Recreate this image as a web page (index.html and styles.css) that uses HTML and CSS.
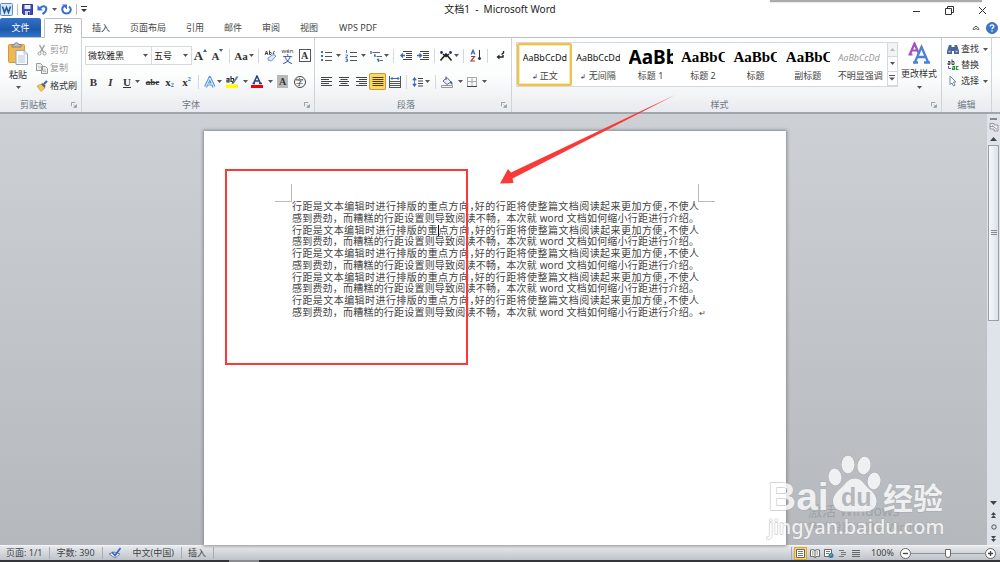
FILE: index.html
```html
<!DOCTYPE html>
<html lang="zh-CN">
<head>
<meta charset="utf-8">
<title>文档1 - Microsoft Word</title>
<link rel="stylesheet" href="styles.css">
</head>
<body>
<svg class="defs" aria-hidden="true">
  <symbol id="caret" viewBox="0 0 5 3"><path d="M0 0h5L2.500 3z" fill="#555"/></symbol>
  <symbol id="launch" viewBox="0 0 7 7"><path d="M.5 5V.5H5" fill="none" stroke="#8a919c"/><path d="M6.500 3v3.500H3zM3 3l2 2" fill="#8a919c" stroke="#8a919c" stroke-width=".6"/></symbol>
</svg>
<div class="app">
  <header class="titlebar">
    <div class="quick">
      <svg width="13" height="13" viewBox="0 0 13 13"><rect x=".5" y=".5" width="12" height="12" rx="1" fill="#dbe8f7" stroke="#5b8bc9"/><path d="M2.500 3.500l2 6 2-5 2 5 2-6" fill="none" stroke="#1f57a8" stroke-width="1.600"/></svg>
      <i class="bar"></i>
      <button class="q" aria-label="保存"><svg width="11" height="11" viewBox="0 0 11 11"><path d="M.5.5h10v10h-9l-1-1z" fill="#4049b4" stroke="#343a94"/><path d="M2.500 1h6v4h-6z" fill="#e8edfa"/><path d="M3 7h5v4H3z" fill="#c9cde6"/><path d="M6 8h1.500v3H6z" fill="#2b2f70"/></svg></button>
      <button class="q undo" aria-label="撤消"><svg width="11" height="11" viewBox="0 0 11 11"><path d="M3 4.500C5 1 9.500 1.800 9.300 5 9.200 7.500 7.500 9 5.500 10" fill="none" stroke="#3a6fcc" stroke-width="2"/><path d="M.5 1v5.500H6z" fill="#3a6fcc"/></svg><svg class="caret dark" width="5" height="3"><use href="#caret"/></svg></button>
      <button class="q" aria-label="重复"><svg width="11" height="11" viewBox="0 0 11 11"><path d="M3 2.200C0 4 1 9.500 5.500 9.500S11 4.500 8 2.500" fill="none" stroke="#3a6fcc" stroke-width="2"/><path d="M1 .5h5v5z" fill="#3a6fcc"/></svg></button>
      <i class="bar"></i>
      <button class="q more" aria-label="自定义快速访问工具栏"><svg width="6" height="7" viewBox="0 0 6 7"><path d="M0 .5h6" stroke="#333"/><path d="M0 3h6L3 6z" fill="#333"/></svg></button>
    </div>
    <h1>文档1&nbsp; -&nbsp; Microsoft Word</h1>
    <div class="winbtns">
      <button aria-label="最小化"><svg width="9" height="9" viewBox="0 0 9 9"><path d="M1 5.500h7" stroke="#333"/></svg></button>
      <button aria-label="还原"><svg width="9" height="9" viewBox="0 0 9 9" fill="none" stroke="#333"><path d="M.5 2.500h6v6h-6zM2.500 2V.5h6v6H7"/></svg></button>
      <button aria-label="关闭"><svg width="9" height="9" viewBox="0 0 9 9"><path d="M1 1l7 7M8 1L1 8" stroke="#333"/></svg></button>
    </div>
  </header>
  <nav class="tabs">
    <button class="file">文件</button>
    <button class="tab current">开始</button>
    <button class="tab">插入</button>
    <button class="tab wide">页面布局</button>
    <button class="tab">引用</button>
    <button class="tab">邮件</button>
    <button class="tab">审阅</button>
    <button class="tab">视图</button>
    <button class="tab wps">WPS PDF</button>
    <div class="help">
      <button aria-label="折叠功能区"><svg width="8" height="6" viewBox="0 0 8 6"><path d="M1 3.500L4 1l3 2.500M1 3.500c-.5 1.500 1 1.500 3 0 2 1.500 3.500 1.500 3 0" fill="none" stroke="#555"/></svg></button>
      <button aria-label="帮助"><svg width="12" height="12" viewBox="0 0 12 12"><circle cx="6" cy="6" r="5.600" fill="#3c78c8" stroke="#2a5ba3" stroke-width=".7"/><path d="M4.200 4.600C4.200 2.300 8 2.400 7.800 4.600 7.600 5.700 6 5.700 6 7.200" fill="none" stroke="#fff" stroke-width="1.300"/><circle cx="6" cy="9" r=".8" fill="#fff"/></svg></button>
    </div>
  </nav>
  <section class="ribbon">
    <div class="group clip">
      <div class="body">
        <button class="big"><svg width="20" height="24" viewBox="0 0 20 24"><rect x=".5" y="2.500" width="16" height="18" rx="1" fill="#f0b84e" stroke="#d39a35"/><path d="M4 2.500h2.500C6.500 0 10.500 0 10.500 2.500H13V5H4z" fill="#b9bec6" stroke="#6e747d" stroke-width=".8"/><path d="M8 8.500h8l3.500 3.500v10.500H8z" fill="#f8fbff" stroke="#8fa3bd"/><path d="M16 8.500V12h3.500M10 14h7M10 16h7M10 18h7M10 20h7" fill="none" stroke="#a9bcd4" stroke-width=".8"/></svg><span>粘贴</span><svg class="caret" width="5" height="3"><use href="#caret"/></svg></button>
        <div class="list">
          <button class="line off"><svg width="12" height="12" viewBox="0 0 12 12" fill="none" stroke="#999"><path d="M3.500 1l4 7M8.500 1l-4 7" stroke-width="1.300"/><circle cx="3.500" cy="9.500" r="1.500"/><circle cx="8.500" cy="9.500" r="1.500"/></svg>剪切</button>
          <button class="line off"><svg width="12" height="12" viewBox="0 0 12 12" fill="#eee" stroke="#999"><path d="M.5 1.500h4l2 2v5h-6zM5.500 4.500h4l2 2v5h-6z"/><path d="M2 5h3M7 8h3M7 9.500h3" stroke-width=".6"/></svg>复制</button>
          <button class="line"><svg width="12" height="12" viewBox="0 0 12 12"><path d="M1 6l4-2 4 4-4 3.500z" fill="#f2c94f" stroke="#c18f26" stroke-width=".6"/><path d="M5 4l2-1 2.500 2.500L9 8z" fill="#555f78"/><path d="M8 4l3-3" stroke="#3b62ae" stroke-width="2"/></svg>格式刷</button>
        </div>
      </div>
      <footer><span>剪贴板</span><svg width="6" height="6"><use href="#launch"/></svg></footer>
    </div>
    <div class="group font">
      <div class="rows">
        <div class="row">
          <select class="combo name" aria-label="字体"><option>微软雅黑</option></select>
          <select class="combo size" aria-label="字号"><option>五号</option></select>
          <button class="w17 serif"><span class="t13">A</span><svg class="tip" width="4" height="3" viewBox="0 0 4 3"><path d="M0 3h4L2 0z" fill="#2d5fb3"/></svg></button>
          <button class="w17 serif"><span class="t11">A</span><svg class="tip" width="4" height="3" viewBox="0 0 4 3"><path d="M0 0h4L2 3z" fill="#2d5fb3"/></svg></button>
          <i class="sep"></i>
          <button class="w22 serif"><span class="t11">Aa</span><svg class="caret" width="5" height="3"><use href="#caret"/></svg></button>
          <i class="sep"></i>
          <button class="w17" aria-label="清除格式"><svg width="13" height="13" viewBox="0 0 13 13"><path d="M1 6l1.500-4L4 6M1.500 4.500h2M5.500 1.500v4h1.500q1.500-1 0-2H5.500M10.500 2Q8.500 3 10 5.500" fill="none" stroke="#333" stroke-width=".9"/><path d="M4 9l5-3.500 3 1.500-4.500 5L4 11z" fill="#dbe9fa" stroke="#5b86c4" stroke-width=".8"/></svg></button>
          <button class="w17 pinyin"><small>wén</small><span>文</span></button>
          <button class="w17"><span class="boxed">A</span></button>
        </div>
        <div class="row">
          <button class="w17 serif t11">B</button>
          <button class="w17 serif t11"><em>I</em></button>
          <button class="w25 serif t11"><u>U</u><svg class="caret far" width="5" height="3"><use href="#caret"/></svg></button>
          <button class="w17 serif t9"><s>abe</s></button>
          <button class="w17 serif t11">x<sub>2</sub></button>
          <button class="w17 serif t11">x<sup>2</sup></button>
          <i class="sep"></i>
          <button class="w22" aria-label="文本效果"><svg width="12" height="12" viewBox="0 0 12 12"><path d="M1.500 11L5.800 2 10 11M3.500 8h5" fill="none" stroke="#5a9bd8" stroke-width="3.200"/><path d="M1.500 11L5.800 2 10 11M3.500 8h5" fill="none" stroke="#e9f5ff" stroke-width="1"/></svg><svg class="caret" width="5" height="3"><use href="#caret"/></svg></button>
          <button class="w25" aria-label="突出显示"><svg width="13" height="13" viewBox="0 0 13 13"><path d="M0 9.500h12V13H0z" fill="#ff0"/><path d="M.5 3.500h2.500V7H1V5h2M5 1v5.500h2.500v-3H5" fill="none" stroke="#333" stroke-width="1.200"/><path d="M7 8l4.500-6.500" stroke="#5f82b5" stroke-width="2"/><path d="M5.500 9l1-2 1.500 1z" fill="#222"/></svg><svg class="caret far" width="5" height="3"><use href="#caret"/></svg></button>
          <button class="w25" aria-label="字体颜色"><svg width="13" height="13" viewBox="0 0 13 13"><path d="M0 10h12v3H0z" fill="#f00000"/><path d="M2.500 8.500L6 1l3.500 7.500M4 6h4M1.500 8.500h2.500M8 8.500h3" fill="none" stroke="#24427f" stroke-width="1.500"/></svg><svg class="caret far" width="5" height="3"><use href="#caret"/></svg></button>
          <button class="w17"><span class="shade">A</span></button>
          <button class="w17"><span class="ring">字</span></button>
        </div>
      </div>
      <footer><span>字体</span><svg width="6" height="6"><use href="#launch"/></svg></footer>
    </div>
    <div class="group para">
      <div class="rows">
        <div class="row">
          <button class="w25" aria-label="项目符号"><svg width="12" height="12" viewBox="0 0 12 12"><path d="M1 1h2v2H1zM1 5h2v2H1zM1 9h2v2H1z" fill="#3f6fbc"/><path d="M5 2.500h7M5 6.500h7M5 10.500h7" stroke="#555"/></svg><svg class="caret far" width="5" height="3"><use href="#caret"/></svg></button>
          <button class="w25" aria-label="编号"><svg width="12" height="12" viewBox="0 0 12 12"><path d="M1.500 0v3M.5 5h2v1l-2 1.500h2M.5 9h2v2.500h-2M1 10h1.500" fill="none" stroke="#3f6fbc" stroke-width=".9"/><path d="M5 2.500h7M5 6.500h7M5 10.500h7" stroke="#555"/></svg><svg class="caret far" width="5" height="3"><use href="#caret"/></svg></button>
          <button class="w22" aria-label="多级列表"><svg width="13" height="12" viewBox="0 0 13 12"><path d="M1 1v3M4 5h1v2M7 9.500h1.500V12" fill="none" stroke="#3f6fbc" stroke-width="1.400"/><path d="M2.500 2.500H10M6.500 6.500H12M9.500 10.500H13" stroke="#666"/></svg><svg class="caret" width="5" height="3"><use href="#caret"/></svg></button>
          <i class="sep"></i>
          <button class="w17" aria-label="减少缩进"><svg width="12" height="12" viewBox="0 0 12 12"><path d="M3 1.500h9M6 3.500h6M6 5.500h6M6 7.500h6M3 9.500h9" stroke="#444"/><path d="M5 5.500H1M3 3.500l-2 2 2 2" fill="none" stroke="#3569bd" stroke-width="1.400"/></svg></button>
          <button class="w17" aria-label="增加缩进"><svg width="12" height="12" viewBox="0 0 12 12"><path d="M3 1.500h9M6 3.500h6M6 5.500h6M6 7.500h6M3 9.500h9" stroke="#444"/><path d="M0 5.500h4M2.500 3.500l2 2-2 2" fill="none" stroke="#3569bd" stroke-width="1.400"/></svg></button>
          <i class="sep"></i>
          <button class="w22" aria-label="中文版式"><svg width="14" height="12" viewBox="0 0 14 12"><path d="M1.500 10.500L7 4l5.500 6.500M4 4l3 2.500L10 4" fill="none" stroke="#222" stroke-width="1.600"/><circle cx="2.500" cy="2.500" r="1.400" fill="#222a8c"/><circle cx="11.500" cy="2.500" r="1.400" fill="#222a8c"/></svg><svg class="caret" width="5" height="3"><use href="#caret"/></svg></button>
          <i class="sep"></i>
          <button class="w17" aria-label="排序"><svg width="12" height="13" viewBox="0 0 12 13"><path d="M1 5.500L3 1l2 4.500M2 4h2" fill="none" stroke="#3569bd" stroke-width="1.100"/><path d="M1 7.500h3.500L1 12h4" fill="none" stroke="#b23030" stroke-width="1.200"/><path d="M9.500 1v10M8 9l1.500 2L11 9z" fill="#333" stroke="#333"/></svg></button>
          <i class="sep"></i>
          <button class="w17" aria-label="显示编辑标记"><svg width="12" height="12" viewBox="0 0 12 12"><path d="M9.500 1v2L7.500 4.500" fill="none" stroke="#222" stroke-width="1.400"/><path d="M9 5v2H5" fill="none" stroke="#222" stroke-width="1.400"/><path d="M5.500 4.500L2.500 7l3 2.500z" fill="#222"/></svg></button>
        </div>
        <div class="row">
          <button class="w17" aria-label="左对齐"><svg width="12" height="11" viewBox="0 0 12 11"><path d="M0 1.500h11M0 3.500h8M0 5.500h11M0 7.500h8M0 9.500h11" stroke="#444"/></svg></button>
          <button class="w17" aria-label="居中"><svg width="12" height="11" viewBox="0 0 12 11"><path d="M1 1.500h10M2.500 3.500h7M1 5.500h10M2.500 7.500h7M1 9.500h10" stroke="#444"/></svg></button>
          <button class="w17" aria-label="右对齐"><svg width="12" height="11" viewBox="0 0 12 11"><path d="M1 1.500h11M4 3.500h8M1 5.500h11M4 7.500h8M1 9.500h11" stroke="#444"/></svg></button>
          <button class="w17 active" aria-label="两端对齐"><svg width="12" height="11" viewBox="0 0 12 11"><path d="M.5 1.500h11M.5 3.500h11M.5 5.500h11M.5 7.500h11M.5 9.500h11" stroke="#4a3f18"/></svg></button>
          <button class="w17" aria-label="分散对齐"><svg width="12" height="12" viewBox="0 0 12 12"><path d="M.5 0v12M11.500 0v12M1 5.500h10M1 7.500h10M1 9.500h10M1 11.500h10" stroke="#555"/><path d="M2 2.500h8M3.500 1L2 2.500 3.500 4M8.500 1L10 2.500 8.500 4" fill="none" stroke="#3569bd"/></svg></button>
          <i class="sep"></i>
          <button class="w22" aria-label="行距"><svg width="12" height="12" viewBox="0 0 12 12"><path d="M2.500 1.500v9M.8 4l1.700-2.500L4.200 4zM.8 8l1.700 2.500L4.200 8z" fill="#3569bd" stroke="#3569bd" stroke-width=".8"/><path d="M6 2.500h5M6 5h5M6 7.500h5M6 10h5" stroke="#444"/></svg><svg class="caret" width="5" height="3"><use href="#caret"/></svg></button>
          <i class="sep"></i>
          <button class="w25" aria-label="底纹"><svg width="13" height="12" viewBox="0 0 13 12"><path d="M2 5l4-3.500L10 6 6 8.500z" fill="#e8f0fb" stroke="#557" stroke-width=".9"/><path d="M10 5q2 1 1.500 4Q9 8 9 6z" fill="#3569bd"/><path d="M5 4V.5" stroke="#557"/><path d="M.5 9.500h11v2H.5z" fill="#eee" stroke="#999"/></svg><svg class="caret far" width="5" height="3"><use href="#caret"/></svg></button>
          <button class="w25" aria-label="边框"><svg width="12" height="12" viewBox="0 0 12 12" fill="none"><path d="M1 1.500h10M1.500 1v9M10.500 1v9M6 1v9M1 5.500h10" stroke="#aaa"/><path d="M1 10.500h10" stroke="#444"/></svg><svg class="caret far" width="5" height="3"><use href="#caret"/></svg></button>
        </div>
      </div>
      <footer><span>段落</span><svg width="6" height="6"><use href="#launch"/></svg></footer>
    </div>
    <div class="group styles">
      <div class="body">
        <div class="gallery">
          <button class="style chosen"><b class="plain">AaBbCcDd</b><span><small>↲</small> 正文</span></button>
          <button class="style"><b class="plain">AaBbCcDd</b><span><small>↲</small> 无间隔</span></button>
          <button class="style"><b class="head">AaBb</b><span>标题 1</span></button>
          <button class="style"><b class="cambria">AaBbC</b><span>标题 2</span></button>
          <button class="style"><b class="cambria">AaBbC</b><span>标题</span></button>
          <button class="style"><b class="cambria">AaBbC</b><span>副标题</span></button>
          <button class="style"><b class="faint">AaBbCcDd</b><span>不明显强调</span></button>
          <div class="scroll">
            <button class="dim" aria-label="上一行"><svg width="5" height="3" viewBox="0 0 5 3"><path d="M0 3h5L2.500 0z" fill="#bbb"/></svg></button>
            <button aria-label="下一行"><svg width="5" height="3"><use href="#caret"/></svg></button>
            <button aria-label="其他"><svg width="6" height="6" viewBox="0 0 6 6"><path d="M0 .5h6" stroke="#555"/><path d="M0 2.500h6L3 5.500z" fill="#555"/></svg></button>
          </div>
        </div>
        <button class="big change"><svg width="22" height="22" viewBox="0 0 22 22" fill="none"><path d="M2 12L6.500 1.500 11 12M3.500 8.500h6M.5 12.500h4" stroke="#a54fc0" stroke-width="2.200"/><path d="M7 20l6.500-15L20 20M9.500 15h8M5 20.500h5M16 20.500h6" stroke="#4a83d4" stroke-width="2.300"/></svg><span>更改样式</span><svg class="caret" width="5" height="3"><use href="#caret"/></svg></button>
      </div>
      <footer><span>样式</span><svg width="6" height="6"><use href="#launch"/></svg></footer>
    </div>
    <div class="group edit">
      <div class="list">
        <button class="line"><svg width="12" height="12" viewBox="0 0 12 12"><path d="M2 2h2.500v2h3V2H10l2 6v3H7V8H5v3H0V8z" fill="#48659c"/><path d="M1.500 8.500h2M8.500 8.500h2" stroke="#b6c9ea" stroke-width="1.500"/></svg>查找<svg class="caret" width="5" height="3"><use href="#caret"/></svg></button>
        <button class="line"><svg width="12" height="12" viewBox="0 0 12 12" fill="none"><path d="M1 2.500h2v3H1V4h2M5 .5v5h2v-3H5" stroke="#444"/><path d="M1.500 7v2.500H4" stroke="#3569bd"/><path d="M5.500 7.500h2v3h-2V9h2M11.500 7.500h-2v3h2" stroke="#26903a" stroke-width="1.200"/></svg>替换</button>
        <button class="line"><svg width="12" height="12" viewBox="0 0 12 12"><path d="M3 1v8.500L5 8l1.500 3 1.500-.7L6.500 7H9z" fill="#fff" stroke="#6f87ab"/></svg>选择<svg class="caret" width="5" height="3"><use href="#caret"/></svg></button>
      </div>
      <footer><span>编辑</span></footer>
    </div>
  </section>
  <main class="work">
    <div class="desk">
      <article class="page">
        <i class="mark left"></i><i class="mark right"></i>
        <div class="text">
          <p class="half">行距是文本编辑时进行排版的重点方向，好的行距将使整篇文档阅读起来更加方便，不使人</p>
          <p>感到费劲，而糟糕的行距设置则导致阅读不畅，本次就 word 文档如何缩小行距进行介绍。</p>
          <p class="half">行距是文本编辑时进行排版的重<i class="cursor"></i>点方向，好的行距将使整篇文档阅读起来更加方便，不使人</p>
          <p>感到费劲，而糟糕的行距设置则导致阅读不畅，本次就 word 文档如何缩小行距进行介绍。</p>
          <p class="half">行距是文本编辑时进行排版的重点方向，好的行距将使整篇文档阅读起来更加方便，不使人</p>
          <p>感到费劲，而糟糕的行距设置则导致阅读不畅，本次就 word 文档如何缩小行距进行介绍。</p>
          <p class="half">行距是文本编辑时进行排版的重点方向，好的行距将使整篇文档阅读起来更加方便，不使人</p>
          <p>感到费劲，而糟糕的行距设置则导致阅读不畅，本次就 word 文档如何缩小行距进行介绍。</p>
          <p class="half">行距是文本编辑时进行排版的重点方向，好的行距将使整篇文档阅读起来更加方便，不使人</p>
          <p>感到费劲，而糟糕的行距设置则导致阅读不畅，本次就 word 文档如何缩小行距进行介绍。<span class="end">↵</span></p>
        </div>
        <i class="frame"></i>
        <svg class="arrow" width="176" height="90" viewBox="0 0 176 90"><path d="M175 0L11 77.500 8 74 0 88.500l13.500-.5-1-4.500z" fill="#f93a37"/></svg>
      </article>
    </div>
    <div class="vbar">
      <i class="split"></i>
      <button aria-label="标尺"><svg width="10" height="10" viewBox="0 0 10 10" fill="#f2eef2" stroke="#85808f" stroke-width=".8"><path d="M1 1.500h4V3h4v6H5V7H1z"/><path d="M3 3.500l5 4M1 4.500h3" /></svg></button>
      <button aria-label="向上滚动"><svg width="7" height="4" viewBox="0 0 7 4"><path d="M0 4h7L3.500 0z" fill="#444"/></svg></button>
      <div class="track"><div class="thumb"><svg width="6" height="6" viewBox="0 0 6 6"><path d="M0 .5h6M0 2.500h6M0 4.500h6" stroke="#888"/></svg></div></div>
      <button aria-label="向下滚动"><svg width="7" height="4" viewBox="0 0 7 4"><path d="M0 0h7L3.500 4z" fill="#444"/></svg></button>
      <button aria-label="上一页"><svg width="5" height="6" viewBox="0 0 5 6"><path d="M0 3h5L2.500 0zM0 6h5L2.500 3z" fill="#444"/></svg></button>
      <button aria-label="选择浏览对象"><svg width="6" height="6" viewBox="0 0 6 6"><circle cx="3" cy="3" r="2.200" fill="none" stroke="#555"/></svg></button>
      <button aria-label="下一页"><svg width="5" height="6" viewBox="0 0 5 6"><path d="M0 0h5L2.500 3zM0 3h5L2.500 6z" fill="#444"/></svg></button>
    </div>
    <div class="activate"><strong>激活 Windows</strong><span>转到“设置”以激活 Windows。</span></div>
    <svg class="brand" width="184" height="92" viewBox="0 0 184 92">
      <g class="glyphs"><text class="bai" x="3" y="57">Bai</text>
      <ellipse cx="70" cy="24" rx="6.500" ry="8.500" transform="rotate(-8 70 24)"/><ellipse cx="83" cy="11.500" rx="6.500" ry="9"/><ellipse cx="99" cy="12.500" rx="6.500" ry="9" transform="rotate(10 99 12.500)"/><ellipse cx="109" cy="28" rx="6.500" ry="8.500" transform="rotate(8 109 28)"/>
      <path d="M90 25.500c7 0 9 6 13 9.500 5 4 9 8 8.500 14-.5 7-6 9.500-12 9.500H80c-7 0-12-4-12-10.500 0-6 5-10 9-14 4-3.500 6-8.500 13-8.500z"/>
      <text class="jing" x="118" y="56">经验</text><text class="site" x="3" y="81">jingyan.baidu.com</text></g>
      <text class="du" x="76" y="53">du</text>
    </svg>
  </main>
  <footer class="status">
    <span class="cell">页面: 1/1</span><span class="cell">字数: 390</span>
    <button class="cell proof" aria-label="校对"><svg width="14" height="12" viewBox="0 0 14 12"><path d="M1 7l5-2 6 2-5 4z" fill="#fff" stroke="#6d83a8"/><path d="M4 5l3 3.500L12.500 1" fill="none" stroke="#3a68c0" stroke-width="1.800"/></svg></button>
    <span class="cell lang">中文(中国)</span><span class="cell">插入</span>
    <div class="views">
      <button class="view on" aria-label="页面视图"><svg width="9" height="9" viewBox="0 0 9 9"><path d="M.5.5h8v8h-8z" fill="#fff" stroke="#666"/><path d="M2 2.500h5M2 4.500h5M2 6.500h5" stroke="#777"/></svg></button>
      <button class="view" aria-label="阅读版式"><svg width="10" height="9" viewBox="0 0 10 9"><path d="M5 1.500Q3 0 .5 1v6.500Q3 6.500 5 8.500q2-2 4.500-1V1Q7 0 5 1.500v7" fill="#fff" stroke="#666"/><path d="M2 3h1.500M2 5h1.500M6.500 3H8M6.500 5H8" stroke="#777"/></svg></button>
      <button class="view" aria-label="Web 版式"><svg width="10" height="9" viewBox="0 0 10 9"><path d="M.5.5h7v7h-7z" fill="#fff" stroke="#666"/><path d="M2 2.500h4M2 4.500h3" stroke="#777"/><circle cx="7" cy="6.500" r="2.500" fill="#2c7bae"/><circle cx="7" cy="6" r="1" fill="#58b878"/></svg></button>
      <button class="view" aria-label="大纲视图"><svg width="9" height="9" viewBox="0 0 9 9"><path d="M1 1.500h5M3 3.500h5M3 5.500h5M1 7.500h5" stroke="#777"/></svg></button>
      <button class="view" aria-label="草稿"><svg width="9" height="9" viewBox="0 0 9 9"><path d="M0 1.500h8M0 3.500h8M0 5.500h8M0 7.500h8" stroke="#666"/></svg></button>
    </div>
    <button class="pct">100%</button>
    <button class="round" aria-label="缩小"><svg width="11" height="11" viewBox="0 0 11 11"><circle cx="5.500" cy="5.500" r="5" fill="#fff" stroke="#666"/><path d="M3 5.500h5" stroke="#444" stroke-width="1.300"/></svg></button>
    <input class="zoom" type="range" min="0" max="100" value="50" aria-label="显示比例">
    <button class="round" aria-label="放大"><svg width="11" height="11" viewBox="0 0 11 11"><circle cx="5.500" cy="5.500" r="5" fill="#fff" stroke="#666"/><path d="M3 5.500h5M5.500 3v5" stroke="#444" stroke-width="1.300"/></svg></button>
  </footer>
  <div class="taskbar"><i></i></div>
  <i class="edge"></i>
</div>
</body>
</html>
```
FILE: styles.css
```css
* { box-sizing: border-box; }
body { margin: 0; font: 9px/12px "Noto Sans", "Noto Sans CJK SC", sans-serif; color: #333; }
button { display: flex; align-items: center; justify-content: center; margin: 0; padding: 0; border: 0; background: none; color: inherit; font: inherit; white-space: nowrap; }
svg { flex: none; display: block; }
.defs { position: absolute; width: 0; height: 0; }
.app { position: relative; display: flex; flex-direction: column; height: 100vh; overflow: hidden; background: #fff; }
.edge { position: absolute; top: 0; right: 18px; width: 212px; height: 2px; background: #ababab; box-shadow: 0 0 2px #bbb; }

.titlebar { display: grid; grid-template-columns: 1fr auto 1fr; align-items: center; height: 18px; }
.titlebar h1 { margin: 0; font-size: 10px; font-weight: 400; line-height: 18px; color: #222; }
.quick { display: flex; align-items: center; gap: 4px; height: 16px; }
.bar { width: 1px; height: 11px; background: #bbb; }
.q { height: 14px; }
.undo { gap: 4px; }
.winbtns { display: flex; justify-content: flex-end; gap: 15px; padding: 3px 9px 0 0; }
.winbtns button { width: 18px; }

.tabs { display: flex; height: 20px; border-bottom: 1px solid #bcc2c9; }
.file { width: 41px; border-radius: 2px 2px 0 0; background: linear-gradient(#3472c8, #1e5aab 60%, #2f74cd); color: #fff; }
.tab { width: 38px; color: #444; }
.tab.wide { width: 56px; }
.tab.wps { width: 60px; }
.tab.current { height: 20px; margin-left: 3px; border: 1px solid #bcc2c9; border-bottom: 0; border-radius: 2px 2px 0 0; background: #fff; }
.help { display: flex; align-items: center; gap: 6px; margin-left: auto; padding-right: 2px; }

.ribbon { display: flex; height: 76px; background: linear-gradient(#fff, #fcfdfd 50%, #e8ebef); border-bottom: 2px solid #a1a6ad; }
.group { display: flex; flex-direction: column; flex: none; border-right: 1px solid #cfd4da; padding-top: 2px; }
.group > footer { position: relative; display: flex; justify-content: center; margin-top: auto; padding-bottom: 1px; color: #707784; }
.group > footer svg { position: absolute; right: 4px; bottom: 4px; }
.clip { width: 82px; }
.font { width: 233px; }
.para { width: 197px; }
.clip footer span, .font footer span, .para footer span, .styles footer span { margin-right: 14px; }
.styles { flex: 1 1 0; min-width: 0; }
.edit { width: 50px; margin-right: 8px; }
.body { display: flex; }
.big { flex-direction: column; gap: 3px; width: 36px; height: 51px; padding-top: 2px; justify-content: flex-start; }
.big .caret { margin-top: 2px; }
.list { display: flex; flex-direction: column; }
.line { justify-content: flex-start; gap: 2px; height: 18px; }
.line.off { color: #999; }
.clip .list { padding-top: 1px; }
.edit .list { padding: 1px 0 0 5px; }
.edit .line { height: 16px; }
.edit .line .caret { margin-left: 2px; }

.rows { display: flex; flex-direction: column; gap: 7px; padding: 6px 0 0 3px; }
.row { display: flex; align-items: center; height: 19px; }
.row button { flex: none; height: 17px; }
.row .w17 { width: 17px; }
.row .w22 { width: 22px; gap: 1px; }
.row .w25 { width: 25px; gap: 2px; }
.far { margin-left: 2px; }
.sep { flex: none; width: 1px; height: 14px; margin: 0 3px; background: #d5d9de; }
.combo { flex: none; height: 19px; padding: 0 2px; border: 1px solid #d6dade; border-radius: 0; appearance: none; background: #fff url("data:image/svg+xml,%3Csvg xmlns='http://www.w3.org/2000/svg' width='5' height='3'%3E%3Cpath d='M0 0h5L2.500 3z' fill='%23555'/%3E%3C/svg%3E") no-repeat right 3px center; color: #222; font: inherit; }
.name { width: 67px; }
.size { width: 40px; border-left: 0; }
.serif { font-family: "Liberation Serif", serif; font-weight: 700; color: #333; }
.t13 { font-size: 13px; }
.t11 { font-size: 11px; }
.t9 { font-size: 9px; }
.tip { align-self: flex-start; margin-top: 2px; }
.serif sub, .serif sup { font-size: 6px; line-height: 6px; color: #2d5fb3; vertical-align: baseline; }
.serif sub { margin-top: 6px; }
.serif sup { margin-bottom: 5px; }
.pinyin { flex-direction: column; color: #2d4fa3; }
.pinyin small { font-size: 6px; line-height: 6px; color: #333; }
.pinyin span { font-size: 10px; line-height: 10px; }
.boxed, .shade { width: 12px; height: 13px; font: 700 10px/11px "Liberation Serif", serif; text-align: center; }
.boxed { border: 1px solid #555; }
.shade { width: 11px; background: #b9b9b9; line-height: 13px; }
.ring { width: 12px; height: 12px; border: 1px solid #444; border-radius: 50%; font-size: 8px; line-height: 10px; text-align: center; }
.active { border-radius: 2px; background: #fbd863; box-shadow: inset 0 0 0 1px #c79b3c; }

.gallery { display: flex; flex: 1 1 0; min-width: 0; height: 45px; margin: 2px 0 0 4px; border: 1px solid #d5d9de; background: #fff; }
.style { flex: 1 1 0; min-width: 0; flex-direction: column; justify-content: flex-start; overflow: hidden; padding: 2px 1px 0 0; }
.style b { width: 44px; height: 25px; overflow: hidden; color: #111; line-height: 25px; text-align: left; }
.style b.plain, .style b.faint { font-weight: 400; }
.style b.faint { font-style: italic; color: #999; }
.style b.head { font-size: 19px; color: #000; }
.style b.cambria { font: 700 15px/25px "Liberation Serif", serif; color: #000; }
.style span { color: #444; }
.style small { font-size: 7px; }
.style.chosen { border: 2px solid #efc24f; border-radius: 2px; padding: 0; box-shadow: inset 0 0 0 1px #fbe9ae; }
.scroll { display: flex; flex-direction: column; width: 10px; border-left: 1px solid #d5d9de; }
.scroll button { flex: 1; border-bottom: 1px solid #d5d9de; }
.scroll .dim { background: #f1f3f5; }
.change { width: 42px; gap: 4px; margin-right: 1px; }

.work { position: relative; display: flex; flex: 1; min-height: 0; background: linear-gradient(#cdd1d6, #b5b8bd); }
.desk { display: flex; justify-content: center; flex: 1; padding: 17px 0 0 3px; }
.page { position: relative; width: 582px; padding: 70px 87px 0 88px; background: #fff; box-shadow: 0 0 3px 1px #858a90; }
.text { display: flex; flex-direction: column; justify-content: space-between; min-height: 117px; font-size: 10px; line-height: 11px; color: #444; }
.text p { position: relative; margin: 0; white-space: nowrap; text-align: justify; text-align-last: justify; }
.half { font-feature-settings: "halt"; }
.cursor { display: inline-block; width: 1px; height: 11px; margin-right: -1px; background: #000; vertical-align: top; }
.end { position: absolute; left: 100%; font-size: 8px; }
.mark { position: absolute; top: 53px; width: 17px; height: 18px; border-bottom: 1px solid #bbb; }
.mark.left { left: 71px; border-right: 1px solid #bbb; }
.mark.right { right: 71px; border-left: 1px solid #bbb; }
.frame { position: absolute; left: 21px; top: 38px; width: 243px; height: 196px; border: 2px solid #f93a37; }
.arrow { position: absolute; left: 296px; top: -36px; z-index: 2; }

.vbar { display: flex; flex-direction: column; width: 13px; background: #dfe3ea; }
.vbar button { flex: none; height: 12px; }
.split { width: 7px; height: 2px; margin: 4px auto 1px; background: #888; }
.track { flex: 1; }
.thumb { display: flex; align-items: center; justify-content: center; width: 11px; height: 50%; min-height: 20px; margin: 0 1px; border: 1px solid #9a9fa8; background: linear-gradient(90deg, #f6f8fb, #dde1e8); }

.activate { position: absolute; right: 51px; bottom: 11px; width: 141px; display: flex; flex-direction: column; color: rgba(100, 105, 110, .3); white-space: nowrap; font-size: 10px; line-height: 14px; }
.activate strong { font-size: 14px; font-weight: 400; line-height: 18px; }
.brand { position: absolute; right: 51px; bottom: 0; }
.glyphs { fill: #fff; stroke: #a4a7ab; stroke-width: 1px; paint-order: stroke; opacity: .78; }
.bai { font: 700 39px "Liberation Sans", sans-serif; }
.jing { font: 700 30px "Noto Sans CJK SC", sans-serif; }
.site { font: 500 20px "Noto Sans", sans-serif; }
.du { font: 700 25px "Liberation Sans", sans-serif; fill: #b4b7bb; }

.status { display: flex; align-items: center; flex: none; height: 15px; border-top: 1px solid #f2f4f6; background: linear-gradient(#e6e9ed, #bfc4ca); color: #444; }
.cell { height: 12px; padding: 0 7px 0 6px; border-right: 1px solid #a9adb3; white-space: nowrap; }
.cell.proof { border: 0; padding: 0 5px; }
.views { display: flex; align-items: center; gap: 1px; margin-left: auto; padding-left: 2px; border-left: 1px solid #a9adb3; }
.view { width: 13px; height: 13px; }
.view.on { border: 1px solid #dba83a; background: #fbd863; }
.pct { margin: 0 6px 0 8px; font-size: 9px; }
.zoom { width: 74px; height: 12px; margin: 0; appearance: none; background: linear-gradient(#8d939b, #8d939b) center / 100% 1px no-repeat; }
.zoom::-webkit-slider-thumb { appearance: none; width: 6px; height: 9px; border: 1px solid #666; border-radius: 0 0 3px 3px; background: #fff; }
.round { width: 11px; }
.round:last-child { margin-right: 4px; }
.taskbar { flex: none; height: 2px; background: #33353a; }
.taskbar i { display: block; width: 30px; height: 2px; margin-left: 229px; background: #8a8c90; }
```
